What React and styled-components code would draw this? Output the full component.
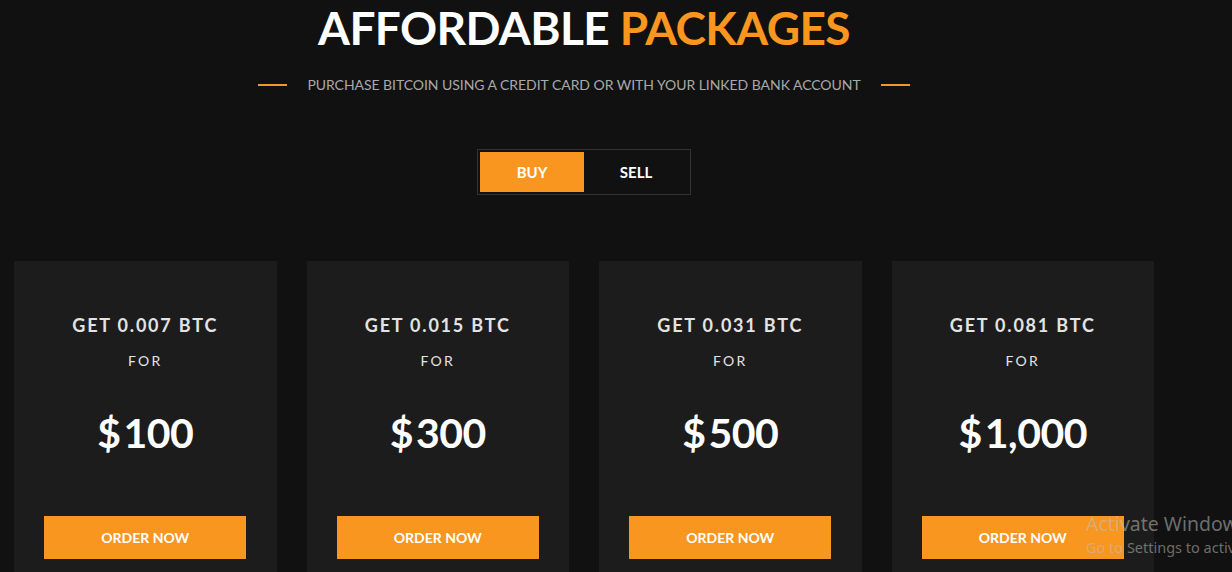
import React from "react";
import styled, { createGlobalStyle } from "styled-components";

const Global = createGlobalStyle`
  html, body { margin: 0; padding: 0; background: #111111; }
  body { font-family: Lato, "Open Sans", sans-serif; overflow: hidden; }
`;

const ORANGE = "#f8961f";

const Page = styled.div`
  width: 1232px;
  height: 572px;
  background: #111111;
  position: relative;
  overflow: hidden;
`;

const Container = styled.div`
  width: 1140px;
  margin-left: 14px;
  display: flex;
  flex-direction: column;
  align-items: center;
`;

const Title = styled.h2`
  margin: 0;
  font-size: 46px;
  line-height: 56px;
  font-weight: 700;
  color: #ffffff;
  letter-spacing: -0.6px;
  & span { color: ${ORANGE}; }
`;

const SubRow = styled.div`
  margin-top: 19px;
  display: flex;
  align-items: center;
  gap: 20px;
`;

const Dash = styled.span`
  width: 29px;
  height: 2px;
  background: ${ORANGE};
`;

const Sub = styled.p`
  margin: 0;
  font-size: 14px;
  line-height: 20px;
  color: #a9a9a9;
  letter-spacing: -0.05px;
`;

const Toggle = styled.div`
  margin-top: 54px;
  display: flex;
  padding: 2px;
  border: 1px solid #333333;
`;

const ToggleBtn = styled.button`
  width: 104px;
  height: 40px;
  border: 0;
  background: ${(p) => (p.$active ? ORANGE : "transparent")};
  color: #ffffff;
  font-family: Lato, sans-serif;
  font-weight: 700;
  font-size: 15px;
  cursor: pointer;
`;

const Cards = styled.div`
  margin-top: 66px;
  width: 100%;
  display: grid;
  grid-template-columns: repeat(4, 1fr);
  gap: 30px;
`;

const Card = styled.div`
  background: #1c1c1c;
  height: 330px;
  display: flex;
  flex-direction: column;
  align-items: center;
  padding-top: 52px;
  box-sizing: border-box;
`;

const Get = styled.div`
  font-size: 18px;
  line-height: 24px;
  font-weight: 700;
  color: #e3e3e3;
  letter-spacing: 1.8px;
`;

const For = styled.div`
  margin-top: 14px;
  font-size: 14px;
  line-height: 20px;
  color: #e3e3e3;
  letter-spacing: 2.2px;
`;

const Price = styled.div`
  margin-top: 37px;
  font-size: 41px;
  line-height: 50px;
  font-weight: 700;
  color: #ffffff;
  letter-spacing: -0.5px;
  & b { margin-right: 3px; font-weight: 700; }
`;

const Order = styled.button`
  margin-top: 58px;
  width: 202px;
  height: 43px;
  border: 0;
  background: ${ORANGE};
  color: #ffffff;
  font-family: Lato, sans-serif;
  font-weight: 700;
  font-size: 14px;
  cursor: pointer;
`;

const Watermark = styled.div`
  position: absolute;
  left: 1086px;
  top: 511px;
  font-family: "Noto Sans", "Open Sans", sans-serif;
  color: rgba(190, 190, 190, 0.55);
  white-space: nowrap;
  & .a { font-size: 19.5px; line-height: 26px; }
  & .b { font-size: 14.5px; line-height: 20px; margin-top: 0px; }
`;

const packs = [
  { btc: "0.007", usd: "100" },
  { btc: "0.015", usd: "300" },
  { btc: "0.031", usd: "500" },
  { btc: "0.081", usd: "1,000" },
];

export default function App() {
  return (
    <Page>
      <Global />
      <Container>
        <Title>
          AFFORDABLE <span>PACKAGES</span>
        </Title>
        <SubRow>
          <Dash />
          <Sub>PURCHASE BITCOIN USING A CREDIT CARD OR WITH YOUR LINKED BANK ACCOUNT</Sub>
          <Dash />
        </SubRow>
        <Toggle>
          <ToggleBtn $active>BUY</ToggleBtn>
          <ToggleBtn>SELL</ToggleBtn>
        </Toggle>
        <Cards>
          {packs.map((p) => (
            <Card key={p.usd}>
              <Get>GET {p.btc} BTC</Get>
              <For>FOR</For>
              <Price>
                <b>$</b>
                {p.usd}
              </Price>
              <Order>ORDER NOW</Order>
            </Card>
          ))}
        </Cards>
      </Container>
      <Watermark>
        <div className="a">Activate Windows</div>
        <div className="b">Go to Settings to activate Windows.</div>
      </Watermark>
    </Page>
  );
}
